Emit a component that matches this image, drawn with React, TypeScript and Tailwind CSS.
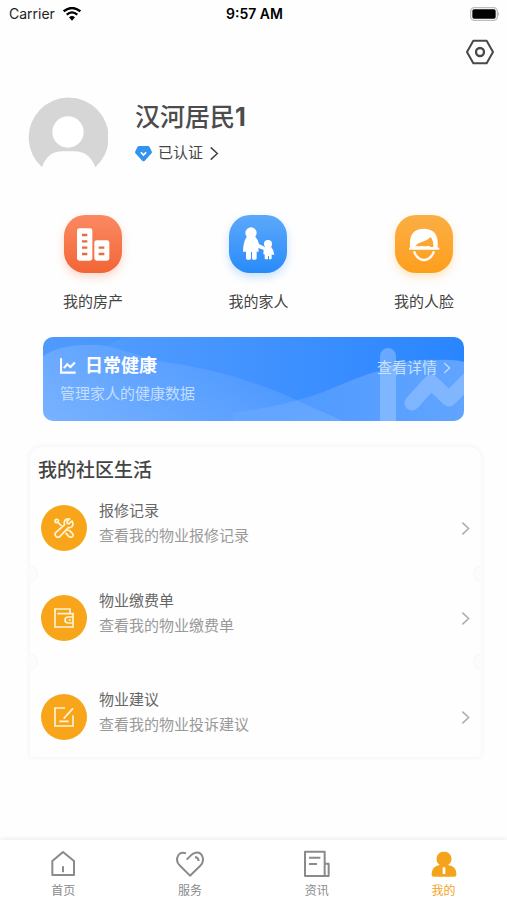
import type { ReactNode } from "react";

function ChevronRight({ className }: { className: string }) {
  return (
    <svg viewBox="0 0 10 16" fill="none" stroke="currentColor" className={className} aria-hidden="true">
      <path d="M1.5 1.5 8.5 8l-7 6.5" strokeWidth="1.6" />
    </svg>
  );
}

function StatusBar() {
  return (
    <div className="grid h-7 grid-cols-3 items-center pl-[9px] pr-[7px] text-black">
      <div className="flex items-center gap-2">
        <span className="text-[14px] leading-5 text-[#222]">Carrier</span>
        <svg viewBox="0 0 54 42" className="h-[14px] w-[18px]" fill="none" stroke="#000" aria-hidden="true">
          <path d="M2 13Q27-7 52 13" strokeWidth="7" />
          <path d="M11 23Q27 9 43 23" strokeWidth="6.5" />
          <path d="M18 31Q27 23 36 31L27 41Z" fill="#000" stroke="none" />
        </svg>
      </div>
      <span className="text-center text-[14px] font-semibold leading-5">9:57 AM</span>
      <svg viewBox="0 0 90 42" className="h-[14px] w-[30px] justify-self-end" aria-hidden="true">
        <rect x="2" y="2" width="80" height="38" rx="11" fill="#fff" stroke="#bdbdbd" strokeWidth="4" />
        <rect x="7" y="7" width="70" height="28" rx="5" fill="#000" />
        <path d="M84 15q7 6 0 12z" fill="#bdbdbd" />
      </svg>
    </div>
  );
}

function Profile() {
  return (
    <section className="mt-[31px] flex items-start pl-7">
      <svg viewBox="0 0 240 213" className="h-[71px] w-20" aria-hidden="true">
        <path d="M42 211A120 120 0 1 1 202 211C190 177 167 163 140 163H102C75 163 54 177 42 211Z" fill="#d6d6d6" />
        <circle cx="120" cy="105" r="47" fill="#fff" />
      </svg>
      <div className="ml-[27px] mt-[5px]">
        <h1 className="text-[25px] font-medium leading-[30px] text-[#4c4c4c]">
          汉河居民<span className="font-bold">1</span>
        </h1>
        <button type="button" className="mt-2 flex h-[26px] items-center text-[15px] leading-6 text-[#444]">
          <svg viewBox="0 0 52 50" className="mr-[6px] h-[17px] w-[17px]" aria-hidden="true">
            <path d="M13 2h26q4 0 6 4l6 12q2 4-1 7L30 47q-4 4-8 0L2 25q-3-3-1-7L7 6q2-4 6-4z" fill="#3493ee" />
            <path d="m18 21 8 9 8-9" fill="none" stroke="#fff" strokeWidth="5" />
          </svg>
          已认证
          <ChevronRight className="ml-[6px] h-[15px] w-[10px]" />
        </button>
      </div>
    </section>
  );
}

function HouseArt() {
  return (
    <svg viewBox="0 0 174 174" className="size-full" aria-hidden="true">
      <rect x="39" y="40" width="46" height="97" rx="7" fill="#fff" />
      <rect x="91" y="76" width="45" height="61" rx="7" fill="#fff" />
      <path d="M54 60h16M54 79h16M54 98h16M54 117h16M104 98h17M104 117h17" stroke="#e86a40" strokeWidth="7" />
    </svg>
  );
}

function FamilyArt() {
  return (
    <svg viewBox="0 0 174 174" className="size-full" fill="#fff" aria-hidden="true">
      <circle cx="66" cy="54" r="17" />
      <path d="M53 65h26q8 8 11 22l18 9-3 9-17-6 1 11H83v20q0 4-4 4h-7q-3 0-3-4v-19h-3v19q0 4-4 4h-7q-4 0-4-4v-20h-9q0-28 11-45z" />
      <circle cx="117" cy="87" r="12" />
      <path d="M109 95h17q8 8 10 24h-8v11q0 3-3 3h-5v-10h-3v10h-7q-3 0-3-3v-12h-4l1-17z" />
    </svg>
  );
}

function FaceArt() {
  return (
    <svg viewBox="0 0 174 174" className="size-full" fill="none" aria-hidden="true">
      <path
        d="M45 103V78Q49 41 87 41Q125 42 128 79V103ZM62 96Q64 90 70 94H76Q80 90 85 94H96Q101 90 106 96H115Q116 78 107 66Q97 77 80 81Q63 86 61 96Z"
        fill="#fff"
        fillRule="evenodd"
      />
      <path d="M42 101h91" stroke="#fff" strokeWidth="6" />
      <path d="M57 109q10 26 30 26t30-26" stroke="#fff" strokeWidth="7" />
    </svg>
  );
}

const actions: { label: string; tile: string; art: ReactNode }[] = [
  { label: "我的房产", tile: "from-[#fb8961] to-[#f26535] shadow-[0_4px_9px_#f2653540]", art: <HouseArt /> },
  { label: "我的家人", tile: "from-[#5ba8fb] to-[#268bf9] shadow-[0_4px_9px_#268bf940]", art: <FamilyArt /> },
  { label: "我的人脸", tile: "from-[#fbae43] to-[#fd9f18] shadow-[0_4px_9px_#fd9f1840]", art: <FaceArt /> },
];

function QuickActions() {
  return (
    <section className="mt-[47px] flex justify-between pl-[63px] pr-[53px]">
      {actions.map((a) => (
        <button key={a.label} type="button" className="flex flex-col items-center">
          <span className={`size-[58px] rounded-[21px] bg-linear-to-b ${a.tile}`}>{a.art}</span>
          <span className="mt-[17px] text-[15px] leading-6 text-[#444]">{a.label}</span>
        </button>
      ))}
    </section>
  );
}

function HealthBanner() {
  return (
    <a
      href="#health"
      className="relative mx-[43px] mt-[23px] flex h-[84px] items-start justify-between overflow-hidden rounded-[10px] bg-linear-to-r from-[#579fff] to-[#2985ff] pl-[17px] pr-[13px] pt-[17px]"
    >
      <svg viewBox="0 0 421 84" preserveAspectRatio="none" className="absolute inset-0 size-full" aria-hidden="true">
        <defs>
          <linearGradient id="left-wave" x1="0" y1="1" x2="1" y2="0">
            <stop offset="0" stopColor="#fff" stopOpacity="0.2" />
            <stop offset="1" stopColor="#fff" stopOpacity="0.01" />
          </linearGradient>
          <linearGradient id="right-wave" x1="0" y1="0" x2="1" y2="0">
            <stop offset="0" stopColor="#fff" stopOpacity="0.04" />
            <stop offset="1" stopColor="#fff" stopOpacity="0.26" />
          </linearGradient>
        </defs>
        <path d="M0 19Q25 4 65 9L115 24Q180 32 240 57L300 84H0Z" fill="url(#left-wave)" />
        <path d="M0 19Q20 4 65 9L80 0H0Z" fill="#1478ee" fillOpacity="0.1" />
        <path d="M190 76Q250 68 290 51Q325 36 337 34Q360 21 390 23Q412 22 421 25V84H190Z" fill="url(#right-wave)" />
        <path d="M337 84V19a8 8 0 0 1 16 0v65z" fill="#b6d6ff" fillOpacity="0.4" />
        <path d="m369 66 19-21 18 17 22-22" fill="none" stroke="#9cc6ff" strokeOpacity="0.55" strokeWidth="15" strokeLinecap="round" strokeLinejoin="round" />
      </svg>
      <div className="relative">
        <h2 className="flex items-center text-[18px] font-bold leading-6 text-white">
          <svg viewBox="0 0 46 46" className="mr-[9px] size-4" fill="none" stroke="currentColor" strokeWidth="6" aria-hidden="true">
            <path d="M3 1v41h42M11 29l10-11 9 8 13-13" />
          </svg>
          日常健康
        </h2>
        <p className="mt-1 text-[15px] leading-6 text-[#c3deff]">管理家人的健康数据</p>
      </div>
      <span className="relative mt-[2px] flex items-center text-[15px] leading-6 text-[#c9e1ff]">
        查看详情
        <ChevronRight className="ml-[6px] h-3 w-2" />
      </span>
    </a>
  );
}

function ToolsIcon() {
  return (
    <svg viewBox="0 0 60 60" className="size-5" fill="none" stroke="#fff4d8" strokeWidth="5" strokeLinecap="round" strokeLinejoin="round" aria-hidden="true">
      <path d="M54 9 45 17l-5-1-1-6 8-7Q34 1 31 11q-1 5 1 9L6 43q-6 6 0 12t12 0L43 29q13 1 14-11 0-5-3-9z" />
      <circle cx="8" cy="9" r="5" />
      <path d="m12 13 9 9M38 37q7-1 9 1l8 8q5 6 0 10-5 4-10 0l-9-10" />
    </svg>
  );
}

function WalletIcon() {
  return (
    <svg viewBox="0 0 60 60" className="size-5" fill="none" stroke="#fff4d8" strokeWidth="5" aria-hidden="true">
      <path d="M48 15V3H3v54h54V17H10M58 27H43q-10 0-10 9t10 9h15" />
      <path d="M44 36h6" />
    </svg>
  );
}

function EditIcon() {
  return (
    <svg viewBox="0 0 60 60" className="size-5" fill="none" stroke="#fff4d8" strokeWidth="5" aria-hidden="true">
      <path d="M33 3H3v54h54V25M57 4 29 35M16 43h28" />
    </svg>
  );
}

const services = [
  { title: "报修记录", detail: "查看我的物业报修记录", icon: <ToolsIcon />, space: "pt-[15px] pb-4" },
  { title: "物业缴费单", detail: "查看我的物业缴费单", icon: <WalletIcon />, space: "py-[14px]" },
  { title: "物业建议", detail: "查看我的物业投诉建议", icon: <EditIcon />, space: "pt-[25px] pb-[10px]" },
];

function CommunityCard() {
  return (
    <section className="ml-[29px] mr-[25px] mt-[25px] rounded-t-[12px] rounded-b-[4px] border border-[#f8f9fd] bg-[#fefefe] shadow-[0_0_5px_#f3f5fa]">
      <h2 className="pl-2 pt-[12px] text-[19px] font-medium leading-6 text-[#444]">我的社区生活</h2>
      <ul>
        {services.map((s, i) => (
          <li key={s.title} className={`relative ${s.space}`}>
            <a href="#service" className="flex items-center px-[11px]">
              <span className="flex size-[46px] items-center justify-center rounded-full bg-[#f9a51a]">{s.icon}</span>
              <span className="ml-3 flex flex-1 flex-col pb-[10px] text-[15px] leading-[25px]">
                <span className="text-[#666]">{s.title}</span>
                <span className="text-[#999]">{s.detail}</span>
              </span>
              <ChevronRight className="h-[15px] w-[9px] text-[#aaa]" />
            </a>
            {i < services.length - 1 && (
              <>
                <span className="absolute -bottom-2 -left-px h-4 w-[9px] rounded-r-full border border-l-0 border-[#f6f7fd] bg-[#fcfcfe]" />
                <span className="absolute -bottom-2 -right-px h-4 w-[9px] rounded-l-full border border-r-0 border-[#f6f7fd] bg-[#fcfcfe]" />
              </>
            )}
          </li>
        ))}
      </ul>
    </section>
  );
}

const tabs: { label: string; active?: boolean; icon: ReactNode }[] = [
  {
    label: "首页",
    icon: <path d="M10 33 42 6l33 27v42H10zM42 49v18" strokeWidth="6" />,
  },
  {
    label: "服务",
    icon: (
      <path
        d="M30 10Q8 4 4 23Q0 36 13 48L42 77L72 48Q84 37 80 22Q75 6 59 8Q51 9 44 17L32 29M57 21q10 1 11 12"
        strokeWidth="6"
      />
    ),
  },
  {
    label: "资讯",
    icon: <path d="M65 78V5H6v73h71V41H65M18 23h34M18 42h24" strokeWidth="6" />,
  },
  {
    label: "我的",
    active: true,
    icon: (
      <>
        <path d="M29 45Q17 36 20 22Q24 5 42 5T64 22Q67 37 54 45Q79 49 79 70Q80 80 74 80H10Q4 80 5 70Q6 49 29 45Z" fill="currentColor" stroke="none" />
        <path d="M42 52v20" stroke="#fff" strokeWidth="8" />
      </>
    ),
  },
];

function TabBar() {
  return (
    <nav className="mt-auto grid h-[60px] grid-cols-4 bg-white shadow-[0_-2px_4px_#0000000f]">
      {tabs.map((t) => (
        <button
          key={t.label}
          type="button"
          className={`flex flex-col items-center pt-[10px] ${t.active ? "text-[#f5a31a]" : "text-[#8a8a8a]"}`}
        >
          <svg viewBox="0 0 84 84" className="size-7" fill="none" stroke="currentColor" strokeLinejoin="round" aria-hidden="true">
            {t.icon}
          </svg>
          <span className="mt-1 text-[12px] leading-[18px]">{t.label}</span>
        </button>
      ))}
    </nav>
  );
}

export default function App() {
  return (
    <div className="flex min-h-screen flex-col bg-[#fefefe] font-['Inter','Noto_Sans_CJK_SC',sans-serif]">
      <StatusBar />
      <header className="flex justify-end pr-[13px] pt-[10px]">
        <button type="button" aria-label="设置">
          <svg viewBox="0 0 84 84" className="size-7" fill="none" stroke="#484848" strokeWidth="6" strokeLinejoin="round" aria-hidden="true">
            <path d="M22 8h40l19 34-19 34H22L3 42z" />
            <circle cx="42" cy="42" r="12" strokeWidth="7" />
          </svg>
        </button>
      </header>
      <main className="pb-5">
        <Profile />
        <QuickActions />
        <HealthBanner />
        <CommunityCard />
      </main>
      <TabBar />
    </div>
  );
}
